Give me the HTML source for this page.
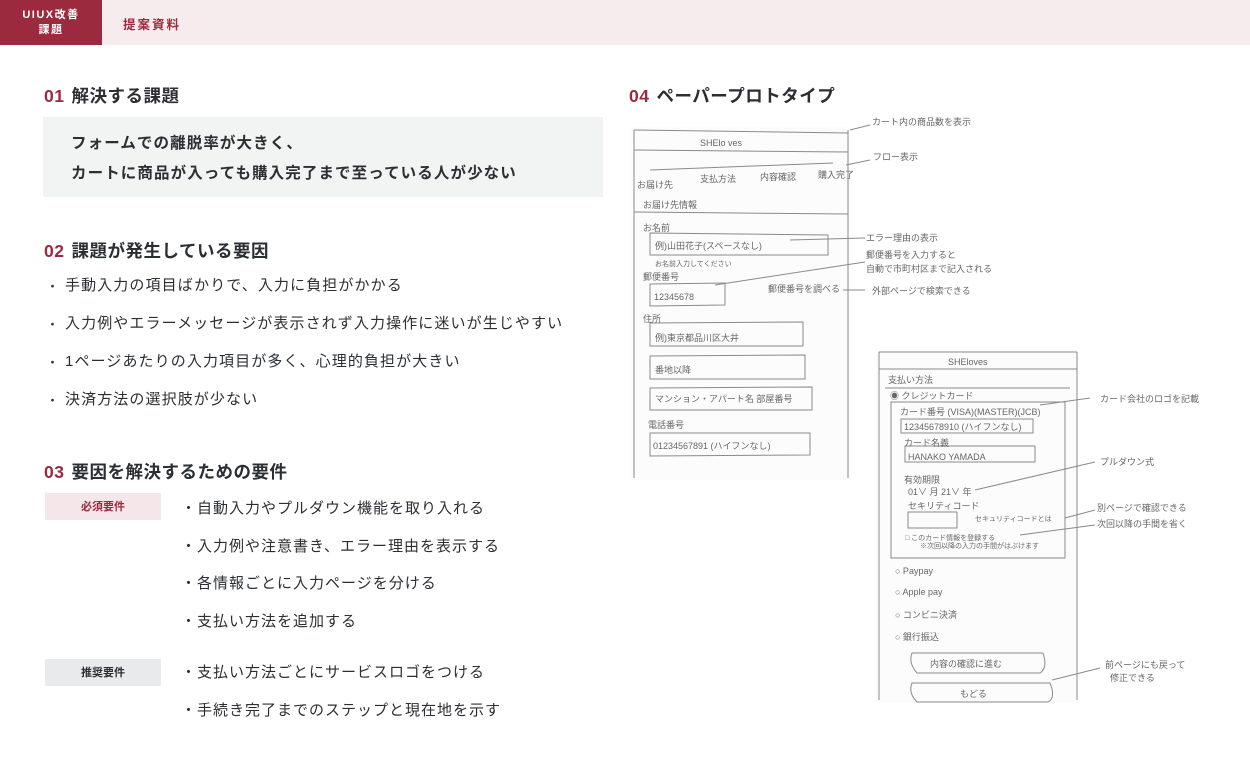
<!DOCTYPE html>
<html><head><meta charset="utf-8">
<style>
*{margin:0;padding:0;box-sizing:border-box}
body{width:1250px;height:759px;background:#fff;font-family:"Liberation Sans","Noto Sans CJK JP",sans-serif;color:#2b2f33;position:relative;overflow:hidden}
.hdr{position:absolute;left:0;top:0;width:1250px;height:45px;background:#f6ecee}
.logo{position:absolute;left:0;top:0;width:102px;height:45px;background:#9b2a3e;color:#fff;font-size:11px;font-weight:bold;text-align:center;line-height:15px;padding-top:8px;letter-spacing:1.5px}
.ttl{position:absolute;left:123px;top:14px;font-size:12.5px;color:#9b2a3e;font-weight:bold;letter-spacing:2px}
.h{position:absolute;font-size:17.5px;font-weight:bold;letter-spacing:0.5px}
.h b{color:#9b2a3e;margin-right:7px}
.box{position:absolute;left:43px;top:117px;width:560px;height:80px;background:#f2f3f3;font-size:15.5px;font-weight:bold;padding:12px 0 0 28px;line-height:30px;letter-spacing:1.1px}
.t{position:absolute;font-size:15px;letter-spacing:1.1px;white-space:nowrap}
.d{position:absolute;left:46px;font-size:13px}
.i{position:absolute;left:181px;font-size:15px;letter-spacing:1px;white-space:nowrap}
.bd{position:absolute;left:45px;width:116px;height:27px;font-size:11px;font-weight:bold;text-align:center;line-height:28px}
svg text{font-family:"Liberation Sans","Noto Sans CJK JP",sans-serif;fill:#666}
</style></head><body>
<div class="hdr"></div>
<div class="logo">UIUX改善<br>課題</div>
<div class="ttl">提案資料</div>

<div class="h" style="left:44px;top:83px"><b>01</b>解決する課題</div>
<div class="box">フォームでの離脱率が大きく、<br>カートに商品が入っても購入完了まで至っている人が少ない</div>

<div class="h" style="left:44px;top:238px"><b>02</b>課題が発生している要因</div>
<div class="d" style="top:276px">・</div><div class="t" style="left:65px;top:274px">手動入力の項目ばかりで、入力に負担がかかる</div>
<div class="d" style="top:314px">・</div><div class="t" style="left:65px;top:312px">入力例やエラーメッセージが表示されず入力操作に迷いが生じやすい</div>
<div class="d" style="top:352px">・</div><div class="t" style="left:65px;top:350px">1ページあたりの入力項目が多く、心理的負担が大きい</div>
<div class="d" style="top:390px">・</div><div class="t" style="left:65px;top:388px">決済方法の選択肢が少ない</div>

<div class="h" style="left:44px;top:459px"><b>03</b>要因を解決するための要件</div>
<div class="bd" style="top:493px;background:#f5e6e9;color:#9b2a3e">必須要件</div>
<div class="i" style="top:497px">・自動入力やプルダウン機能を取り入れる</div>
<div class="i" style="top:535px">・入力例や注意書き、エラー理由を表示する</div>
<div class="i" style="top:572px">・各情報ごとに入力ページを分ける</div>
<div class="i" style="top:610px">・支払い方法を追加する</div>
<div class="bd" style="top:659px;background:#e9eaeb;color:#2b2f33">推奨要件</div>
<div class="i" style="top:661px">・支払い方法ごとにサービスロゴをつける</div>
<div class="i" style="top:699px">・手続き完了までのステップと現在地を示す</div>

<div class="h" style="left:629px;top:83px"><b>04</b>ペーパープロトタイプ</div>

<svg style="position:absolute;left:0;top:0" width="1250" height="759">
<g stroke="#8a8a8a" fill="none" stroke-width="1">
<rect x="630" y="127" width="220" height="353" fill="#fcfcfc" stroke="none"/>
<path d="M634 130 L634 478 M848 130 L848 478 M634 130 L848 133 M634 150 L848 152 M634 212 L848 214"/>
<path d="M650 170 L833 163"/>
<path d="M650 233 L828 235 L828 255 L650 255 Z M650 284 L725 283 L725 305 L650 306 Z M650 323 L803 322 L803 346 L650 346 Z M650 356 L805 355 L805 379 L650 379 Z M650 388 L812 387 L812 410 L650 410 Z M650 433 L810 433 L810 455 L650 456 Z"/>
<path d="M850 130 L870 125 M846 165 L870 160 M790 240 L865 238 M715 285 L865 262 M843 290 L865 290"/>
<rect x="876" y="350" width="202" height="352" fill="#fcfcfc" stroke="none"/>
<path d="M879 352 L879 700 M1077 352 L1077 700 M879 352 L1077 352 M879 369 L1077 369 M885 388 L1070 388"/>
<path d="M891 402 L1065 402 L1065 558 L891 558 Z M901 419 L1033 419 L1033 433 L901 433 Z M905 446 L1035 446 L1035 462 L905 462 Z M908 512 L957 512 L957 528 L908 528 Z"/>
<path d="M912 653 L1043 653 Q1048 668 1040 673 L917 673 Q908 663 912 653 Z M912 683 L1050 683 Q1056 698 1048 702 L917 702 Q908 693 912 683 Z"/>
<path d="M1040 405 L1090 398 M975 490 L1095 462 M1065 518 L1095 510 M1020 535 L1095 525 M1052 680 L1100 668"/>
</g>
<g font-size="9">
<text x="700" y="146">SHElo ves</text>
<text x="637" y="188">お届け先</text><text x="700" y="182">支払方法</text><text x="760" y="180">内容確認</text><text x="818" y="178">購入完了</text>
<text x="643" y="208">お届け先情報</text><text x="643" y="231">お名前</text>
<text x="655" y="249">例)山田花子(スペースなし)</text><text x="655" y="266" font-size="7">お名前入力してください</text>
<text x="643" y="280">郵便番号</text><text x="654" y="300">12345678</text><text x="768" y="292">郵便番号を調べる</text>
<text x="643" y="322">住所</text><text x="655" y="341">例)東京都品川区大井</text><text x="655" y="373">番地以降</text><text x="655" y="402">マンション・アパート名 部屋番号</text>
<text x="648" y="428">電話番号</text><text x="653" y="449">01234567891 (ハイフンなし)</text>
<text x="872" y="125">カート内の商品数を表示</text><text x="873" y="160">フロー表示</text>
<text x="866" y="241">エラー理由の表示</text><text x="866" y="258">郵便番号を入力すると</text><text x="866" y="272">自動で市町村区まで記入される</text>
<text x="872" y="294">外部ページで検索できる</text>
<text x="948" y="365">SHEloves</text><text x="888" y="383">支払い方法</text><text x="890" y="399">◉ クレジットカード</text>
<text x="900" y="415">カード番号 (VISA)(MASTER)(JCB)</text><text x="904" y="430">12345678910 (ハイフンなし)</text>
<text x="904" y="446">カード名義</text><text x="908" y="460">HANAKO YAMADA</text><text x="904" y="483">有効期限</text>
<text x="908" y="495">01∨ 月 21∨ 年</text><text x="908" y="509">セキリティコード</text><text x="975" y="521" font-size="7">セキュリティコードとは</text>
<text x="905" y="540" font-size="7">□ このカード情報を登録する</text><text x="920" y="548" font-size="7">※次回以降の入力の手間がはぶけます</text>
<text x="895" y="574">○ Paypay</text><text x="895" y="595">○ Apple pay</text><text x="895" y="618">○ コンビニ決済</text><text x="895" y="640">○ 銀行振込</text>
<text x="930" y="667">内容の確認に進む</text><text x="960" y="697">もどる</text>
<text x="1100" y="402">カード会社のロゴを記載</text><text x="1100" y="465">プルダウン式</text>
<text x="1097" y="511">別ページで確認できる</text><text x="1097" y="527">次回以降の手間を省く</text>
<text x="1105" y="668">前ページにも戻って</text><text x="1110" y="681">修正できる</text>
</g>
</svg>
</body></html>
